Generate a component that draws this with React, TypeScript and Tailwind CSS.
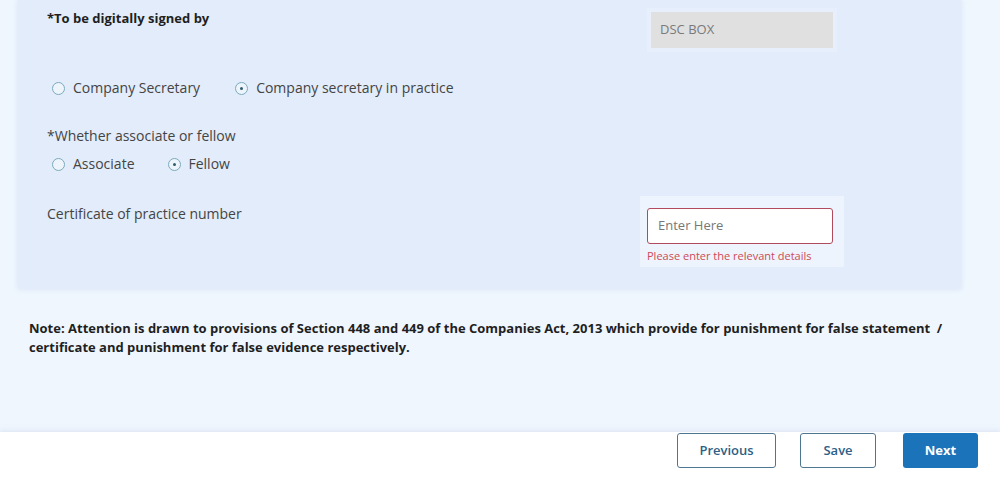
import React from "react";

function Radio({ label, checked }: { label: string; checked?: boolean }) {
  return (
    <div className="flex items-center">
      <span className="flex h-[13px] w-[13px] items-center justify-center rounded-full border border-[#79abbd] bg-[#eef4fc]">
        {checked && <span className="h-[3px] w-[3px] rounded-full bg-[#2f5d6e]" />}
      </span>
      <span className="ml-[8px] text-[14px] leading-[20px] text-[#444]">{label}</span>
    </div>
  );
}

export default function App() {
  return (
    <div
      className="flex h-[495px] w-[1000px] flex-col bg-[#eff6fe]"
      style={{ fontFamily: '"Open Sans", "Noto Sans", sans-serif' }}
    >
      <div className="ml-[18px] w-[943px] bg-[#e2ecfa] pl-[29px] pb-[22px] pt-[8px] shadow-[0_0_6px_rgba(200,215,235,0.6)]">
        <div className="flex">
          <div className="w-[593px] text-[13px] font-bold leading-[20px] text-[#1f1f1f]">*To be digitally signed by</div>
          <div className="ml-[7px] bg-[#e6effb] p-[4px]">
            <div className="flex h-[36px] w-[182px] items-center bg-[#e0e0e0] px-[9px] text-[13px] text-[#7a7a7a]">DSC BOX</div>
          </div>
        </div>
        <div className="mt-[26px] flex pl-[5px]">
          <Radio label="Company Secretary" />
          <div className="ml-[35px]">
            <Radio label="Company secretary in practice" checked />
          </div>
        </div>
        <div className="mt-[28px] text-[14px] leading-[20px] text-[#444]">*Whether associate or fellow</div>
        <div className="mt-[8px] flex pl-[5px]">
          <Radio label="Associate" />
          <div className="ml-[33px]">
            <Radio label="Fellow" checked />
          </div>
        </div>
        <div className="mt-[22px] flex">
          <div className="w-[593px] pt-[8px] text-[14px] leading-[20px] text-[#444]">Certificate of practice number</div>
          <div className="bg-[#edf4fd] pb-[4px] pl-[7px] pr-[11px] pt-[12px]">
            <div className="flex h-[36px] w-[186px] items-center rounded-[3px] border border-[#b04a5c] bg-white px-[10px] text-[13px] text-[#777]">
              Enter Here
            </div>
            <div className="mt-[5px] text-[11px] leading-[14px] text-[#cf4a55]">Please enter the relevant details</div>
          </div>
        </div>
      </div>
      <div className="mt-[30px] pl-[29px] pr-[50px] text-[13px] font-bold leading-[19px] text-[#1f1f1f]">
        Note: Attention is drawn to provisions of Section 448 and 449 of the Companies Act, 2013 which provide for punishment for false statement&nbsp; / certificate and punishment for false evidence respectively.
      </div>
      <div className="mt-auto flex h-[63px] justify-end bg-white pr-[22px] shadow-[0_-2px_4px_rgba(210,220,235,0.5)]">
        <div className="flex items-start gap-[24px] pt-[1px]">
          <button className="flex h-[35px] w-[99px] items-center justify-center rounded-[3px] border border-[#4f7690] text-[13px] font-semibold text-[#2d5f87]">Previous</button>
          <button className="flex h-[35px] w-[76px] items-center justify-center rounded-[3px] border border-[#4f7690] text-[13px] font-semibold text-[#2d5f87]">Save</button>
          <button className="ml-[3px] flex h-[35px] w-[75px] items-center justify-center rounded-[3px] bg-[#1b74ba] text-[13px] font-bold text-white">Next</button>
        </div>
      </div>
    </div>
  );
}
